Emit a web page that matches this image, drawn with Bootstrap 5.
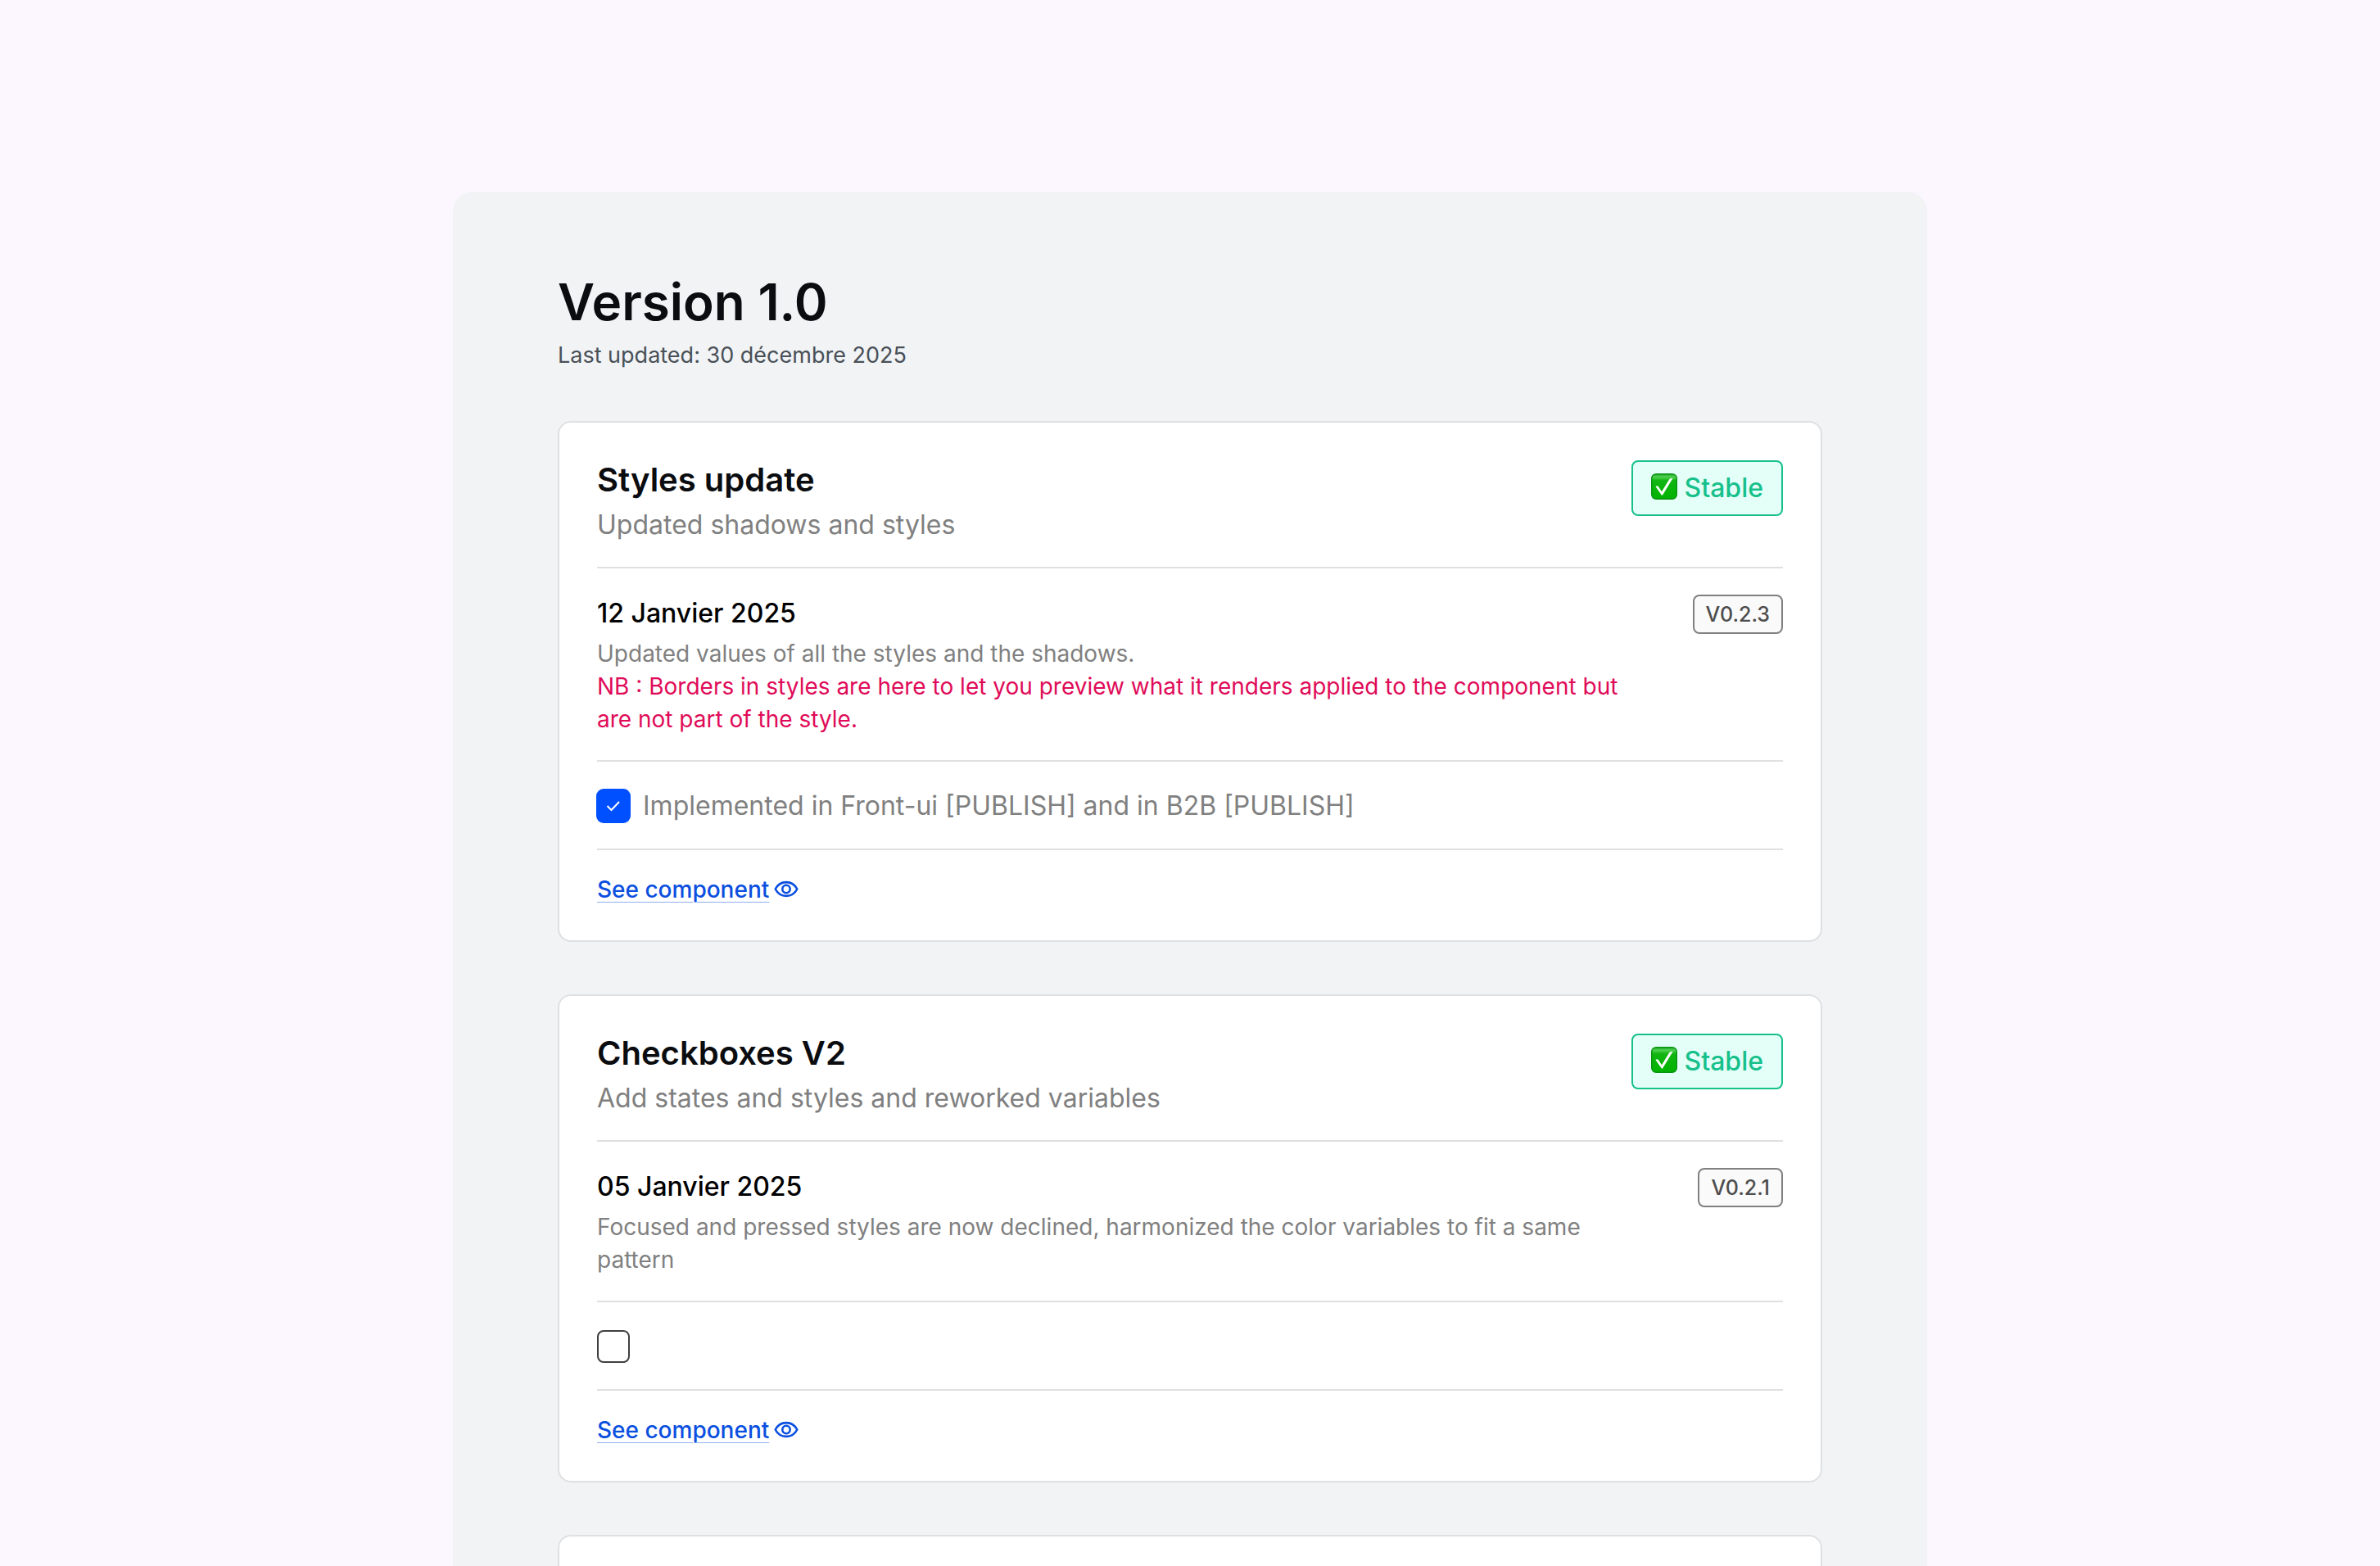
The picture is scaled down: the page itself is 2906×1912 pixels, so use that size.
<!DOCTYPE html>
<html lang="en">
<head>
<meta charset="utf-8">
<meta name="viewport" content="width=device-width, initial-scale=1">
<title>Changelog – Version 1.0</title>
<link href="https://cdn.jsdelivr.net/npm/bootstrap@5.3.0/dist/css/bootstrap.min.css" rel="stylesheet">
<style>
  body { background: #fcf7ff; color: #000; font-family: Inter, "Liberation Sans", sans-serif; font-size: 28px; line-height: 40px; }
  .page { padding-top: 234px; }
  .panel { max-width: 1800px; padding: 96px 128px 0; background: #f1f3f5; border-radius: 24px 24px 0 0; }
  .panel-title { font-size: 62px; line-height: 78px; font-weight: 600; color: #0a0c0f; margin-bottom: 6px; }
  .updated { font-size: 27px; color: #495057; margin-bottom: 60px; }
  .entries { gap: 64px; }
  .entry { border: 2px solid #dee0e2; border-radius: 16px; padding: 46px; background: #fff; }
  .block { padding-bottom: 30px; margin-bottom: 32px; border-bottom: 2px solid #e0e0e0; }
  .block-head { padding-bottom: 28px; }
  .block-split { gap: 64px; }
  .entry-title { font-size: 40px; line-height: 48px; font-weight: 600; color: #0a0c0f; margin-bottom: 8px; }
  .text-l { font-size: 32px; line-height: 46px; }
  .text-soft { color: #808080; }
  .text-note { color: #e00b58; }
  .date { font-weight: 500; margin-bottom: 6px; }
  .status { height: 68px; padding: 0 22px; gap: 8px; border: 2px solid #17c08b; border-radius: 8px; background: #e4fff8; color: #17c08b; font-weight: 500; }
  .status svg { width: 32px; height: 32px; margin-bottom: 4px; }
  .release { height: 48px; padding: 0 14px; border: 2px solid #808080; border-radius: 8px; background: #fafafa; color: #4d4d4d; font-size: 25px; font-weight: 500; }
  .check-line { gap: 16px; height: 44px; }
  .check-line .form-check-input { width: 40px; height: 40px; margin: 0; border: 2px solid #404040; border-radius: 8px; background-size: 24px 24px; }
  .check-line .form-check-input:checked { border-color: #0050ff; background-color: #0050ff; box-shadow: 0 0 0 1px #0050ff;
    background-image: url("data:image/svg+xml,%3Csvg xmlns='http://www.w3.org/2000/svg' viewBox='0 0 24 24' fill='none' stroke='white' stroke-width='2'%3E%3Cpath d='M4.500 12l5 5L19 7'/%3E%3C/svg%3E"); }
  .see { gap: 4px; line-height: 32px; font-weight: 500; color: #0a4fe0; text-decoration: none; }
  .see span { text-decoration: underline 1px #8fb0f0; text-underline-offset: 5px; }
  .see svg { width: 32px; height: 32px; }
</style>
</head>
<body>
<svg class="position-absolute" width="0" height="0" aria-hidden="true">
  <defs>
    <linearGradient id="tick-face" x1="0" y1="0" x2="0" y2="1">
      <stop offset="0" stop-color="#22a82a"/><stop offset=".12" stop-color="#4fd14f"/>
      <stop offset=".26" stop-color="#12b512"/><stop offset="1" stop-color="#00b400"/>
    </linearGradient>
  </defs>
</svg>
<main class="page vh-100 overflow-hidden d-flex flex-column">
  <div class="panel w-100 mx-auto flex-grow-1">
    <header>
      <h1 class="panel-title">Version 1.0</h1>
      <p class="updated">Last updated: 30 décembre 2025</p>
    </header>
    <div class="entries d-flex flex-column">

      <article class="entry">
        <div class="block block-head block-split d-flex justify-content-between align-items-start">
          <div>
            <h2 class="entry-title">Styles update</h2>
            <p class="text-l text-soft mb-0">Updated shadows and styles</p>
          </div>
          <span class="status text-l d-inline-flex align-items-center flex-shrink-0">
            <svg viewBox="0 0 32 32" aria-hidden="true"><rect x=".7" y=".7" width="30.600" height="30.600" rx="5.500" fill="url(#tick-face)" stroke="#0a9212" stroke-width="1.400"/><path d="M5.500 16C6.500 14.800 8.300 14.900 9.200 16.400L13 22.200L22 7.600C22.800 6.300 25 5.900 26.500 6L14.200 26.200C13.800 26.800 13 26.800 12.600 26.200Z" fill="#fff"/></svg>
            Stable
          </span>
        </div>
        <div class="block block-split d-flex justify-content-between align-items-start">
          <div>
            <h3 class="date text-l">12 Janvier 2025</h3>
            <p class="text-soft mb-0">Updated values of all the styles and the shadows.</p>
            <p class="text-note mb-0">NB : Borders in styles are here to let you preview what it renders applied to the component but are not part of the style.</p>
          </div>
          <span class="release d-inline-flex align-items-center flex-shrink-0">V0.2.3</span>
        </div>
        <div class="block">
          <div class="check-line d-flex align-items-center">
            <input class="form-check-input flex-shrink-0" type="checkbox" id="done-styles" checked>
            <label class="text-l text-soft" for="done-styles">Implemented in Front-ui [PUBLISH] and in B2B [PUBLISH]</label>
          </div>
        </div>
        <div class="d-flex">
          <a class="see d-inline-flex align-items-center" href="#styles"><span>See component</span>
            <svg viewBox="0 0 32 32" fill="none" stroke="currentColor" stroke-width="2.600" aria-hidden="true"><path d="M3.700 15.500C9.500 4.300 24.500 4.300 30.300 15.500C24.500 26.700 9.500 26.700 3.700 15.500Z" stroke-linejoin="round"/><circle cx="17" cy="15.500" r="4.700"/></svg></a>
        </div>
      </article>

      <article class="entry">
        <div class="block block-head block-split d-flex justify-content-between align-items-start">
          <div>
            <h2 class="entry-title">Checkboxes V2</h2>
            <p class="text-l text-soft mb-0">Add states and styles and reworked variables</p>
          </div>
          <span class="status text-l d-inline-flex align-items-center flex-shrink-0">
            <svg viewBox="0 0 32 32" aria-hidden="true"><rect x=".7" y=".7" width="30.600" height="30.600" rx="5.500" fill="url(#tick-face)" stroke="#0a9212" stroke-width="1.400"/><path d="M5.500 16C6.500 14.800 8.300 14.900 9.200 16.400L13 22.200L22 7.600C22.800 6.300 25 5.900 26.500 6L14.200 26.200C13.800 26.800 13 26.800 12.600 26.200Z" fill="#fff"/></svg>
            Stable
          </span>
        </div>
        <div class="block block-split d-flex justify-content-between align-items-start">
          <div>
            <h3 class="date text-l">05 Janvier 2025</h3>
            <p class="text-soft mb-0">Focused and pressed styles are now declined, harmonized the color variables to fit a same pattern</p>
          </div>
          <span class="release d-inline-flex align-items-center flex-shrink-0">V0.2.1</span>
        </div>
        <div class="block">
          <div class="check-line d-flex align-items-center">
            <input class="form-check-input flex-shrink-0" type="checkbox" id="done-checkboxes" aria-label="Implemented">
          </div>
        </div>
        <div class="d-flex">
          <a class="see d-inline-flex align-items-center" href="#checkboxes"><span>See component</span>
            <svg viewBox="0 0 32 32" fill="none" stroke="currentColor" stroke-width="2.600" aria-hidden="true"><path d="M3.700 15.500C9.500 4.300 24.500 4.300 30.300 15.500C24.500 26.700 9.500 26.700 3.700 15.500Z" stroke-linejoin="round"/><circle cx="17" cy="15.500" r="4.700"/></svg></a>
        </div>
      </article>

      <article class="entry"></article>
    </div>
  </div>
</main>
<script src="https://cdn.jsdelivr.net/npm/bootstrap@5.3.0/dist/js/bootstrap.bundle.min.js"></script>
</body>
</html>
